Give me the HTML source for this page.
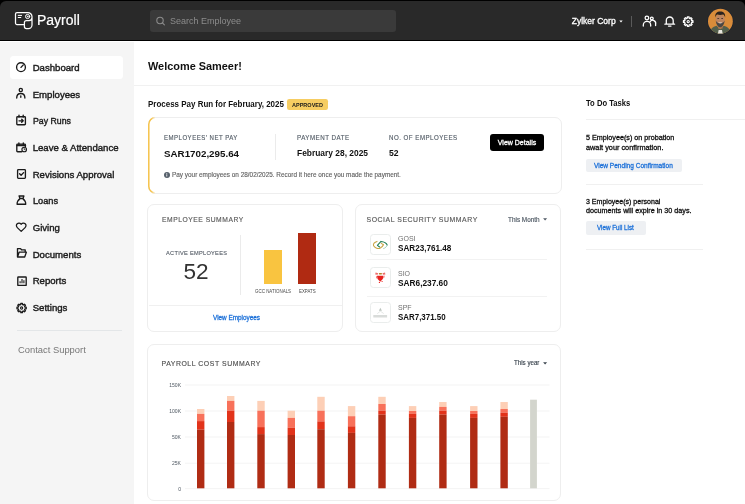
<!DOCTYPE html>
<html>
<head>
<meta charset="utf-8">
<style>
*{box-sizing:border-box;margin:0;padding:0}
html,body{width:745px;height:504px;overflow:hidden;background:#000;font-family:"Liberation Sans",sans-serif;}
#app{position:absolute;left:0;top:1px;width:745px;height:503px}
#pg{position:absolute;left:0;top:-1px;width:745px;height:504px;will-change:transform}
.abs{position:absolute}
.t{position:absolute;white-space:nowrap;line-height:1;transform-origin:0 50%}
.b{font-weight:bold}
.med{-webkit-text-stroke:0.3px currentColor}
.nav{font-size:9.6px;color:#1a1a1a;left:32.7px;-webkit-text-stroke:0.4px #1a1a1a}
.card{position:absolute;border:1px solid #eeeeee;border-radius:7px;background:#fff}
.lbl{font-size:6.9px;letter-spacing:0.55px;color:#57606a;-webkit-text-stroke:0.15px #57606a}
.hl{position:absolute;height:1px;background:#f0f0f0}
.vl{position:absolute;width:1px;background:#ebebeb}
.ax{font-size:5.1px;color:#4f5862;width:20px;text-align:right;transform:scaleX(0.99);transform-origin:100% 50%}
.btn2{position:absolute;background:#eef0f3;border-radius:2px}
.lnk{color:#1a6fd8;font-size:6.7px;-webkit-text-stroke:0.28px #1a6fd8}
svg{position:absolute;overflow:visible}
</style>
</head>
<body>
<div id="app"><div id="pg">
 <!-- header -->
 <div class="abs" style="left:0;top:30px;width:745px;height:474px;background:#fff"></div><div class="abs" style="left:0;top:1px;width:745px;height:40px;background:#000;border-radius:6px 6px 0 0"></div><div class="abs" style="left:0;top:1px;width:745px;height:38.8px;background:#292929;border-radius:6px 6px 0 0"></div>
 <div class="t" style="left:37px;top:13px;font-size:14px;color:#fff;-webkit-text-stroke:0.2px #fff">Payroll</div>
 <div class="abs" style="left:150px;top:10px;width:246px;height:22px;background:#3a3a3a;border-radius:3px"></div>
 <div class="t" style="left:170px;top:17px;font-size:9px;color:#8c8c8c">Search Employee</div>
 <div class="t med" style="left:571.7px;top:17.4px;font-size:8.5px;color:#fff">Zylker Corp</div>
 <div class="abs" style="left:631.2px;top:16.2px;width:1.2px;height:10.6px;background:#5a5a5a"></div>
 <svg class="abs" style="left:707px;top:8px" width="27" height="27" viewBox="707 8 27 27"><defs><clipPath id="av"><circle cx="720.4" cy="21.2" r="12.4"/></clipPath></defs><circle cx="720.4" cy="21.2" r="13" fill="#1b2230"/><g clip-path="url(#av)"><rect x="707" y="8" width="27" height="27" fill="#d98c3a"/><path d="M709,35 c0.5,-5.5 3.5,-8 7.6,-9.2 l3.6,3.4 l3.6,-3.4 c4.1,1.2 7.1,3.7 7.6,9.2 z" fill="#525e4b"/><path d="M718.6,30 h3.4 l0.9,5 h-5.2 z" fill="#e8e6e0"/><rect x="718" y="24" width="4.6" height="4.6" fill="#a87350"/><ellipse cx="720.2" cy="19.6" rx="4.5" ry="5.6" fill="#bd8560"/><path d="M715.3,17.6 c-0.6,-4.4 1.8,-6.2 4.9,-6.2 c3.2,0 5.5,1.8 4.9,6.2 c-0.5,-1.9 -1.2,-2.7 -2,-3 c-1.8,0.5 -4,0.5 -5.8,0 c-0.8,0.3 -1.5,1.1 -2,3 z" fill="#2a221e"/><path d="M715.8,20.6 c0.3,4 2,6.6 4.4,6.6 c2.4,0 4.1,-2.6 4.4,-6.6 c-0.8,1.6 -1.5,2.2 -2.4,2.3 h-4 c-0.9,-0.1 -1.600,-0.7 -2.4,-2.300 z" fill="#4b4744"/><path d="M718.400,22.600 h3.600 c-0.400,1.200 -3.200,1.200 -3.600,0 z" fill="#efe6df"/><rect x="717.400" y="18" width="1.700" height="0.800" fill="#3a2a22"/><rect x="721.300" y="18" width="1.700" height="0.800" fill="#3a2a22"/></g></svg>

 <!-- sidebar -->
 <div class="abs" style="left:0;top:42.3px;width:134px;height:462px;background:#f5f5f5"></div>
 <div class="abs" style="left:9.8px;top:56.4px;width:112.8px;height:22.8px;background:#fff;border-radius:3.5px"></div>
 <div class="t nav" style="top:62.9px">Dashboard</div>
 <div class="t nav" style="top:89.6px">Employees</div>
 <div class="t nav" style="transform:scaleX(0.91);top:116.3px">Pay Runs</div>
 <div class="t nav" style="top:142.9px">Leave &amp; Attendance</div>
 <div class="t nav" style="top:169.6px">Revisions Approval</div>
 <div class="t nav" style="transform:scaleX(0.96);top:196.3px">Loans</div>
 <div class="t nav" style="top:223.0px">Giving</div>
 <div class="t nav" style="top:249.7px">Documents</div>
 <div class="t nav" style="top:276.3px">Reports</div>
 <div class="t nav" style="top:303.0px">Settings</div>
 <div class="abs" style="left:17px;top:329.7px;width:105px;height:1px;background:#e3e6e8"></div>
 <div class="t" style="left:18px;top:345.3px;font-size:9.4px;color:#777">Contact Support</div>

 <svg class="abs" style="left:0;top:0" width="140" height="504" viewBox="0 0 140 504" fill="none" stroke="#1a1a1a" stroke-width="1.35" stroke-linecap="round" stroke-linejoin="round"><circle cx="21" cy="67.200" r="4.400"/><path d="M21,67.400 L23.300,64.900"/><circle cx="20.8" cy="90" r="1.6"/><path d="M16.7,98 c0,-2.800 1.7,-4.500 4.1,-4.500 s4.1,1.700 4.1,4.500 M20.800,95.800 v1.500"/><rect x="16.8" y="116.7" width="8.6" height="8.1" rx="0.8"/><path d="M19,115.100 v2 M23.2,115.100 v2 M19,120.8 h4 M21.7,119.300 l1.500,1.500 l-1.500,1.500"/><path d="M21.6,151.700 h-4 a0.8,0.8 0 0 1 -0.800,-0.800 v-6 a0.800,0.800 0 0 1 0.800,-0.800 h7 a0.800,0.800 0 0 1 0.800,0.800 v1.600 M18.900,143 v1.400 M23.300,143 v1.400"/><path d="M17.200,145.300 h8" stroke-width="1.800"/><circle cx="24.200" cy="149.500" r="2.300" fill="#f5f5f5" stroke-width="1.100"/><path d="M24.200,148.400 v1.200 h0.900" stroke-width="0.800"/><rect x="17.6" y="169.6" width="7.8" height="8.7" rx="0.8"/><path d="M19.6,173.8 l1.5,1.5 l2.5,-2.7"/><path d="M19.100,196 h4.800 l-0.900,2.500 h-3 z M20,198.600 c-2,1.500 -2.900,3.500 -2.900,5.600 h8.600 c0,-2.100 -0.900,-4.100 -2.900,-5.600"/><path d="M21.2,231.4 l-3.9,-3.8 c-1.2,-1.2 -1.2,-2.9 -0.1,-3.9 c1.1,-1 2.8,-0.9 3.7,0.2 l0.3,0.4 l0.3,-0.4 c0.9,-1.1 2.6,-1.2 3.7,-0.2 c1.1,1 1.1,2.7 -0.1,3.9 z" stroke-width="1.25"/><path d="M17.5,257 v-8.4 h3 l1,1.2 h3.7 v1.9 M17.5,257 l1.7,-4.9 h7.2 l-1.7,4.9 z"/><rect x="17.800" y="277" width="8.400" height="8.400" rx="0.500"/><path d="M20.100,283.300 v-2 M22,283.300 v-4.200 M23.900,283.300 v-3" stroke-width="1.100" stroke-linecap="butt"/><path d="M26.23,307.19 L26.23,308.81 L25.00,308.82 L24.58,309.83 L25.45,310.70 L24.30,311.85 L23.43,310.98 L22.42,311.40 L22.41,312.63 L20.79,312.63 L20.78,311.40 L19.77,310.98 L18.90,311.85 L17.75,310.70 L18.62,309.83 L18.20,308.82 L16.97,308.81 L16.97,307.19 L18.20,307.18 L18.62,306.17 L17.75,305.30 L18.90,304.15 L19.77,305.02 L20.78,304.60 L20.79,303.37 L22.41,303.37 L22.42,304.60 L23.43,305.02 L24.30,304.15 L25.45,305.30 L24.58,306.17 L25.00,307.18Z" stroke-width="1.300"/><circle cx="21.600" cy="308" r="1.100" stroke-width="1.100"/></svg>
 <svg class="abs" style="left:0;top:0" width="745" height="42" viewBox="0 0 745 42" fill="none" stroke="#fff" stroke-width="1.3" stroke-linecap="round" stroke-linejoin="round"><path d="M24.4,24.6 H17 a1.5,1.5 0 0 1 -1.5,-1.5 V14 a1.5,1.5 0 0 1 1.5,-1.5 H27.8 a4.2,4.2 0 0 1 4.2,4.2 V25 a3.6,3.6 0 0 1 -3.6,3.6 H26.4 a2,2 0 0 1 -2,-2 V22.6 a2,2 0 0 1 2,-2 H29 a3,3 0 0 0 3,-3" stroke-width="1.25"/><path d="M18.200,15.400 h3.400 M18.200,17.500 h2.600" stroke-width="1"/><circle cx="27.6" cy="16.5" r="2.1" stroke-width="1"/><circle cx="27.6" cy="16.5" r="0.5" fill="#fff" stroke-width="0.6"/><g stroke="#8c8c8c" stroke-width="1.1"><circle cx="160" cy="20.5" r="3.2"/><path d="M162.4,22.9 l2,2"/></g><path d="M619.3,20.6 h3.4 l-1.7,1.9 z" fill="#fff" stroke="none"/><circle cx="646.9" cy="18" r="1.8"/><circle cx="651.8" cy="18.5" r="1.4"/><path d="M643.300,26.100 v-0.900 a3.700,3.900 0 0 1 7.400,0 v0.900 M650.200,21.700 a3,3.200 0 0 1 5.400,2.600 v1.200"/><path d="M664.900,24.200 h9.700 M666.300,24 v-3.500 a3.450,3.500 0 0 1 6.900,0 v3.500 M668.500,26.100 h2.500" stroke-width="1.300"/><path d="M692.93,20.77 L692.93,22.43 L691.70,22.44 L691.27,23.48 L692.13,24.36 L690.96,25.53 L690.08,24.67 L689.04,25.10 L689.03,26.33 L687.37,26.33 L687.36,25.10 L686.32,24.67 L685.44,25.53 L684.27,24.36 L685.13,23.48 L684.70,22.44 L683.47,22.43 L683.47,20.77 L684.70,20.76 L685.13,19.72 L684.27,18.84 L685.44,17.67 L686.32,18.53 L687.36,18.10 L687.37,16.87 L689.03,16.87 L689.04,18.10 L690.08,18.53 L690.96,17.67 L692.13,18.84 L691.27,19.72 L691.70,20.76Z" stroke-width="1.300"/><circle cx="688.2" cy="21.600" r="1.100" stroke-width="1.100"/></svg>
 <!-- main top -->
 <div class="t b" style="transform:scaleX(0.941);left:148px;top:60px;font-size:11.6px;color:#111">Welcome Sameer!</div>
 <div class="hl" style="left:134px;top:85px;width:611px;background:#f1f1f1"></div>
 <div class="t b" style="transform:scaleX(0.928);left:148px;top:100.1px;font-size:8.6px;color:#111">Process Pay Run for February, 2025</div>
 <div class="abs" style="left:287.3px;top:99.1px;width:40.8px;height:10.6px;background:#f6cd62;border-radius:2.2px"></div>
 <div class="t b" style="left:292.2px;top:101.7px;font-size:6px;color:#1a1a1a;transform:scaleX(0.92)">APPROVED</div>

 <!-- pay run card -->
 <div class="card" style="left:148px;top:117px;width:413.5px;height:76.5px"></div><svg class="abs" style="left:0;top:0" width="745" height="504" viewBox="0 0 745 504" fill="none"><defs><linearGradient id="yg" gradientUnits="userSpaceOnUse" x1="148" y1="0" x2="155.500" y2="0"><stop offset="0" stop-color="#f6c34a"/><stop offset="0.450" stop-color="#f6c34a"/><stop offset="1" stop-color="#f6c34a" stop-opacity="0"/></linearGradient></defs><path d="M155.500,117.600 A6.700,6.700 0 0 0 148.800,124.300 V186.200 A6.700,6.700 0 0 0 155.500,192.900" stroke="url(#yg)" stroke-width="1.500"/></svg>
 <div class="t lbl" style="transform:scaleX(0.879);left:163.5px;top:135px">EMPLOYEES' NET PAY</div>
 <div class="t b" style="transform:scaleX(1.019);left:163.5px;top:149px;font-size:9.6px;color:#111">SAR1702,295.64</div>
 <div class="vl" style="left:275px;top:134px;height:26px"></div>
 <div class="t lbl" style="transform:scaleX(0.899);left:297px;top:135px">PAYMENT DATE</div>
 <div class="t b" style="transform:scaleX(0.978);left:297px;top:148.6px;font-size:8.6px;color:#111">February 28, 2025</div>
 <div class="t lbl" style="transform:scaleX(0.892);left:389px;top:135px">NO. OF EMPLOYEES</div>
 <div class="t b" style="left:389px;top:148.6px;font-size:8.6px;color:#111">52</div>
 <div class="abs" style="left:490px;top:134.3px;width:54px;height:17px;background:#000;border-radius:3px"></div>
 <div class="t med" style="left:490px;top:139px;width:54px;text-align:center;font-size:7px;color:#fff">View Details</div>
 <div class="abs" style="left:163.7px;top:171.7px;width:6.2px;height:6.2px;border-radius:50%;background:#56606b"></div>
 <div class="t" style="transform:scaleX(1.017);left:172px;top:171.5px;font-size:6.3px;color:#606060;-webkit-text-stroke:0.12px #606060">Pay your employees on 28/02/2025. Record it here once you made the payment.</div>

 <!-- employee summary -->
 <div class="card" style="left:147px;top:204px;width:196.2px;height:127.5px"></div>
 <div class="t lbl" style="transform:scaleX(0.976);left:162px;top:216.5px;color:#5a5a5a;-webkit-text-stroke:0.15px #5a5a5a">EMPLOYEE SUMMARY</div>
 <div class="t" style="transform:scaleX(0.94);left:165.5px;top:249.7px;font-size:6px;letter-spacing:0.3px;color:#555c66;-webkit-text-stroke:0.12px #555c66">ACTIVE EMPLOYEES</div>
 <div class="t" style="left:183.5px;top:261px;font-size:22.6px;color:#333">52</div>
 <div class="vl" style="left:240px;top:234.5px;height:60px"></div>
 <div class="abs" style="left:264px;top:250px;width:18px;height:33.7px;background:#f9c440"></div>
 <div class="abs" style="left:298px;top:233px;width:18px;height:50.7px;background:#b02a12"></div>
 <div class="t" style="transform:scaleX(0.842);left:255px;top:289.3px;font-size:5.3px;color:#4a4a4a">GCC NATIONALS</div>
 <div class="t" style="transform:scaleX(0.83);left:298.7px;top:289.3px;font-size:5.3px;color:#4a4a4a">EXPATS</div>
 <div class="hl" style="left:149px;top:305px;width:193px"></div>
 <div class="t lnk" style="transform:scaleX(0.953);left:213px;top:314.9px">View Employees</div>

 <!-- social security -->
 <div class="card" style="left:355px;top:204px;width:205.5px;height:127.5px"></div>
 <div class="t lbl" style="left:366.5px;top:216.5px;color:#5a5a5a;-webkit-text-stroke:0.15px #5a5a5a">SOCIAL SECURITY SUMMARY</div>
 <div class="t" style="left:508px;top:216.5px;font-size:6.4px;color:#4f5964;-webkit-text-stroke:0.15px #4f5964">This Month</div>
 <div class="abs" style="left:370px;top:234px;width:20.5px;height:20.5px;border:1px solid #eaedec;border-radius:3.5px"></div>
 <div class="t" style="left:398px;top:234.7px;font-size:7px;color:#707070">GOSI</div>
 <div class="t b" style="transform:scaleX(0.98);left:398px;top:243.5px;font-size:8.3px;color:#111">SAR23,761.48</div>
 <div class="hl" style="left:366.5px;top:259px;width:180.5px;background:#f2f2f2"></div>
 <div class="abs" style="left:370px;top:267px;width:20.5px;height:20.5px;border:1px solid #eaedec;border-radius:3.5px"></div>
 <div class="t" style="left:398px;top:269.7px;font-size:7px;color:#707070">SIO</div>
 <div class="t b" style="left:398px;top:278.7px;font-size:8.3px;color:#111">SAR6,237.60</div>
 <div class="hl" style="left:366.5px;top:296px;width:180.5px;background:#f2f2f2"></div>
 <div class="abs" style="left:370px;top:302px;width:20.5px;height:20.5px;border:1px solid #eaedec;border-radius:3.5px"></div>
 <div class="t" style="left:398px;top:303.7px;font-size:7px;color:#707070">SPF</div>
 <div class="t b" style="transform:scaleX(0.956);left:398px;top:312.5px;font-size:8.3px;color:#111">SAR7,371.50</div>

 <!-- payroll cost -->
 <div class="card" style="left:147px;top:344px;width:413.5px;height:156.5px"></div>
 <div class="t lbl" style="left:161.5px;top:360.5px;color:#525252;-webkit-text-stroke:0.15px #525252">PAYROLL COST SUMMARY</div>
 <div class="t" style="transform:scaleX(0.966);left:514px;top:360.3px;font-size:6.4px;color:#3a444e;-webkit-text-stroke:0.15px #3a444e">This year</div>
 <div class="t ax" style="left:160.7px;top:383.2px">150K</div>
 <div class="t ax" style="left:160.7px;top:409.2px">100K</div>
 <div class="t ax" style="left:160.7px;top:435.2px">50K</div>
 <div class="t ax" style="left:160.7px;top:461.3px">25K</div>
 <div class="t ax" style="left:160.7px;top:486.8px">0</div>
 <svg class="abs" style="left:0;top:0" width="745" height="504" viewBox="0 0 745 504"><rect x="185" y="384.5" width="364.5" height="1" fill="#f4f4f4"/><rect x="185" y="410.5" width="364.5" height="1" fill="#f4f4f4"/><rect x="185" y="436.5" width="364.5" height="1" fill="#f4f4f4"/><rect x="185" y="462.7" width="364.5" height="1" fill="#f4f4f4"/><rect x="185" y="488.1" width="364.5" height="1" fill="#f4f4f4"/><rect x="197.0" y="409.0" width="7.4" height="4.9" fill="#fdcfb6"/><rect x="197.0" y="413.9" width="7.4" height="7.2" fill="#f8715a"/><rect x="197.0" y="421.1" width="7.4" height="8.6" fill="#e2331a"/><rect x="197.0" y="429.7" width="7.4" height="58.6" fill="#b02c14"/><rect x="227.0" y="396.0" width="7.4" height="4.9" fill="#fdcfb6"/><rect x="227.0" y="400.9" width="7.4" height="9.8" fill="#f8715a"/><rect x="227.0" y="410.7" width="7.4" height="11.3" fill="#e2331a"/><rect x="227.0" y="422.0" width="7.4" height="66.3" fill="#b02c14"/><rect x="257.3" y="400.9" width="7.4" height="9.8" fill="#fdcfb6"/><rect x="257.3" y="410.7" width="7.4" height="16.4" fill="#f8715a"/><rect x="257.3" y="427.1" width="7.4" height="7.0" fill="#e2331a"/><rect x="257.3" y="434.1" width="7.4" height="54.2" fill="#b02c14"/><rect x="287.6" y="410.7" width="7.4" height="7.2" fill="#fdcfb6"/><rect x="287.6" y="417.9" width="7.4" height="9.8" fill="#f8715a"/><rect x="287.6" y="427.7" width="7.4" height="7.3" fill="#e2331a"/><rect x="287.6" y="435.0" width="7.4" height="53.3" fill="#b02c14"/><rect x="317.3" y="396.8" width="7.4" height="13.9" fill="#fdcfb6"/><rect x="317.3" y="410.7" width="7.4" height="10.7" fill="#f8715a"/><rect x="317.3" y="421.4" width="7.4" height="7.8" fill="#e2331a"/><rect x="317.3" y="429.2" width="7.4" height="59.1" fill="#b02c14"/><rect x="347.9" y="406.1" width="7.4" height="10.1" fill="#fdcfb6"/><rect x="347.9" y="416.2" width="7.4" height="10.1" fill="#f8715a"/><rect x="347.9" y="426.3" width="7.4" height="6.6" fill="#e2331a"/><rect x="347.9" y="432.9" width="7.4" height="55.4" fill="#b02c14"/><rect x="378.3" y="396.8" width="7.4" height="7.2" fill="#fdcfb6"/><rect x="378.3" y="404.0" width="7.4" height="6.7" fill="#f8715a"/><rect x="378.3" y="410.7" width="7.4" height="4.0" fill="#e2331a"/><rect x="378.3" y="414.7" width="7.4" height="73.6" fill="#b02c14"/><rect x="408.9" y="406.1" width="7.4" height="4.9" fill="#fdcfb6"/><rect x="408.9" y="411.0" width="7.4" height="2.9" fill="#f8715a"/><rect x="408.9" y="413.9" width="7.4" height="4.0" fill="#e2331a"/><rect x="408.9" y="417.9" width="7.4" height="70.4" fill="#b02c14"/><rect x="439.2" y="402.0" width="7.4" height="4.9" fill="#fdcfb6"/><rect x="439.2" y="406.9" width="7.4" height="3.8" fill="#f8715a"/><rect x="439.2" y="410.7" width="7.4" height="4.0" fill="#e2331a"/><rect x="439.2" y="414.7" width="7.4" height="73.6" fill="#b02c14"/><rect x="470.1" y="406.1" width="7.4" height="4.9" fill="#fdcfb6"/><rect x="470.1" y="411.0" width="7.4" height="2.9" fill="#f8715a"/><rect x="470.1" y="413.9" width="7.4" height="4.0" fill="#e2331a"/><rect x="470.1" y="417.9" width="7.4" height="70.4" fill="#b02c14"/><rect x="500.4" y="402.0" width="7.4" height="7.0" fill="#fdcfb6"/><rect x="500.4" y="409.0" width="7.4" height="3.7" fill="#f8715a"/><rect x="500.4" y="412.7" width="7.4" height="4.1" fill="#e2331a"/><rect x="500.4" y="416.8" width="7.4" height="71.5" fill="#b02c14"/><rect x="530.1" y="399.7" width="6.8" height="88.6" fill="#d3d5cd"/></svg>

 <svg class="abs" style="left:0;top:0" width="745" height="504" viewBox="0 0 745 504" fill="none"><path d="M543.100,218.300 h4 l-2,2.200 z" fill="#4f5964"/><path d="M543.100,362.200 h4 l-2,2.200 z" fill="#3a444e"/><rect x="166.400" y="174.300" width="0.800" height="2.200" fill="#fff"/><rect x="166.400" y="173" width="0.800" height="0.800" fill="#fff"/><g stroke-width="1.05" stroke-linecap="round" stroke-linejoin="round"><path d="M377,241.400 C374.400,242.100 373,244 373.500,245.600 C374.500,247.600 377.500,248.900 379.600,248.500 C381.600,247.500 383,246.100 383.500,244.800 L381.200,243.400" stroke="#c9a545"/><path d="M379.600,247 L377.400,245.300 L381,241.400 C384,241.600 386.400,243 387.200,245" stroke="#1f7d52"/><path d="M387.200,245 C387,246.500 385.500,248 383.600,248.600" stroke="#9cc9b3" stroke-width="0.8"/></g><path d="M376.900,275.800 h6.600 l-0.700,3.300 l-2.600,2.700 l-2.600,-2.700 z" fill="#e8221f"/><rect x="378.900" y="272.900" width="3" height="1.500" rx="0.400" fill="#b8862a"/><path d="M375.600,272.600 l2.600,0.600 l-0.600,1.600 l-2.400,-0.400 z M385,272.600 l-2.600,0.600 l0.600,1.600 l2.400,-0.400 z M376,276 l1,0.400 l0.400,2.600 l-1.200,-1 z M384.600,275.600 l-1,0.400 l-0.400,2.600 l1.200,-1 z" fill="#ee6c6a"/><circle cx="379.400" cy="282.400" r="0.600" fill="#e8221f"/><circle cx="382.100" cy="281.500" r="0.600" fill="#e8221f"/><path d="M380.400,307.800 l1.500,2.900 h-3 z" fill="#bcc4be"/><path d="M377.300,313.600 l3.100,-2.400 l3.300,2.300" stroke="#c9cfca" stroke-width="0.500"/><rect x="373.300" y="315" width="13.800" height="2.500" fill="#d9dcda"/></svg>
 <!-- to do -->
 <div class="t b" style="transform:scaleX(0.912);left:586px;top:99.4px;font-size:8.4px;color:#111">To Do Tasks</div>
 <div class="hl" style="left:586px;top:119px;width:159px"></div>
 <div class="t med" style="left:586px;top:134px;font-size:7.2px;color:#111">5 Employee(s) on probation</div>
 <div class="t med" style="transform:scaleX(1.02);left:586px;top:143.5px;font-size:7.2px;color:#111">await your confirmation.</div>
 <div class="btn2" style="left:586px;top:158.8px;width:96px;height:13.4px"></div>
 <div class="t lnk" style="transform:scaleX(0.978);left:594.4px;top:162.5px">View Pending Confirmation</div>
 <div class="hl" style="left:586px;top:184px;width:117px"></div>
 <div class="t med" style="transform:scaleX(0.98);left:586px;top:197.5px;font-size:7.2px;color:#111">3 Employee(s) personal</div>
 <div class="t med" style="left:586px;top:207px;font-size:7.2px;color:#111">documents will expire in 30 days.</div>
 <div class="btn2" style="left:586px;top:221px;width:60px;height:13.5px"></div>
 <div class="t lnk" style="transform:scaleX(0.936);left:597.1px;top:224.5px">View Full List</div>
 <div class="hl" style="left:586px;top:249px;width:117px"></div>
</div></div>
</body>
</html>
